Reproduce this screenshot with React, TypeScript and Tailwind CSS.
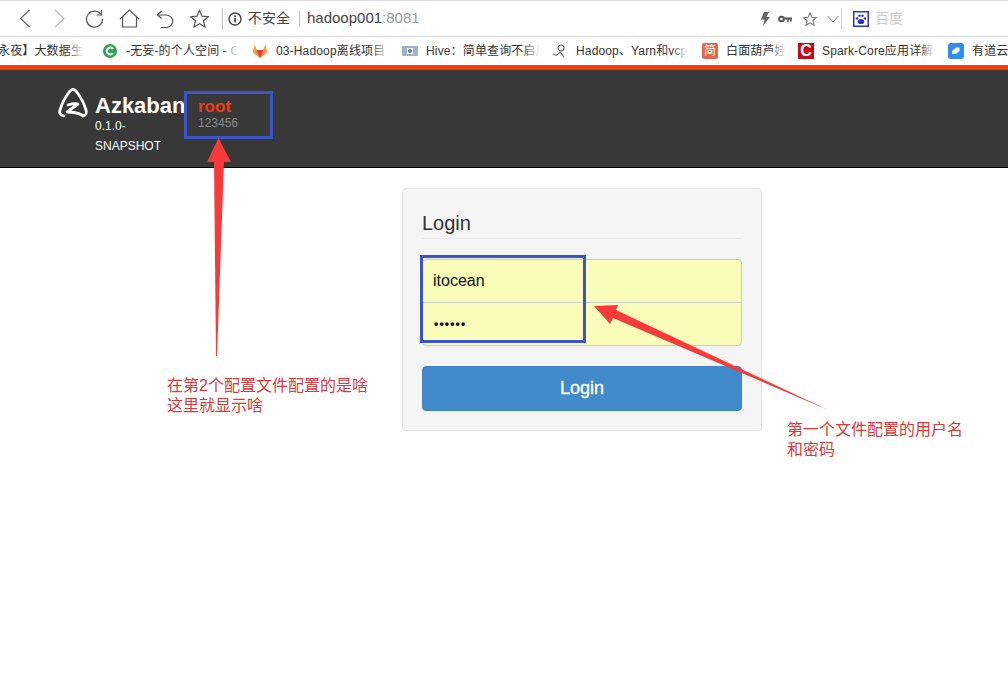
import { ReactNode } from "react";

const cjk = "font-['Liberation_Sans','Noto_Sans_CJK_SC',sans-serif]";

function Bookmark({ icon, text, box }: { icon: ReactNode; text: string; box: string }) {
  return (
    <div className="flex items-center shrink-0">
      {icon}
      <div className={`${box} relative overflow-hidden whitespace-nowrap text-[12px] tracking-[0.15px] text-[#333]`}>
        {text}
        <div className="absolute right-0 top-0 bottom-0 w-4 bg-gradient-to-r from-transparent to-[#fff]" />
      </div>
    </div>
  );
}

function BrowserBar() {
  return (
    <div className={`${cjk} bg-white`}>
      {/* toolbar */}
      <div className="h-[37px] border-t border-[#ddd] border-b border-b-[#d8d8d8] flex items-center pl-[19px] text-[#555]">
        <svg width="12" height="19" viewBox="0 0 12 19" fill="none" stroke="#666" strokeWidth="1.2">
          <path d="M10.5 1 1.5 9.5l9 8.5" />
        </svg>
        <svg width="11" height="19" viewBox="0 0 11 19" fill="none" stroke="#bbb" strokeWidth="1.2" className="ml-[23px]">
          <path d="M1 1l9 8.5L1 18" />
        </svg>
        <svg width="19" height="19" viewBox="0 0 19 19" fill="none" stroke="#555" strokeWidth="1.2" className="ml-[20px]">
          <path d="M16 5.5A8 8 0 1 0 17.5 10" />
          <path d="M16.5 1v5h-5" />
        </svg>
        <svg width="21" height="19" viewBox="0 0 21 19" fill="none" stroke="#555" strokeWidth="1.2" className="ml-[15px]">
          <path d="M1 10 10.5 1 20 10" />
          <path d="M3.5 8v10h14V8" />
        </svg>
        <svg width="18" height="18" viewBox="0 0 18 18" fill="none" stroke="#555" strokeWidth="1.2" className="ml-[16px]">
          <path d="M5.5 1 1.5 5l4 3.5" />
          <path d="M1.5 5H10a6.5 6 0 0 1 0 12.5H5" />
        </svg>
        <svg width="19" height="19" viewBox="0 0 19 19" fill="none" stroke="#555" strokeWidth="1.2" className="ml-[16px]">
          <path d="M9.5 1.2 12 7.2l6.3.5-4.8 4.1 1.5 6.2-5.5-3.3L4 18l1.5-6.2L.7 7.7 7 7.2z" />
        </svg>
        <div className="w-px h-[21px] bg-[#bbb] ml-[13px]" />
        <svg width="14" height="14" viewBox="0 0 14 14" className="ml-[5px]">
          <circle cx="7" cy="7" r="6" fill="none" stroke="#444" strokeWidth="1.4" />
          <rect x="6.2" y="6" width="1.7" height="4.5" fill="#444" />
          <rect x="6.2" y="3.4" width="1.7" height="1.6" fill="#444" />
        </svg>
        <span className="ml-[6px] text-[14px] text-[#444]">不安全</span>
        <div className="w-px h-4 bg-[#bbb] ml-[9px]" />
        <span className="ml-[7px] text-[15px] text-[#444]">
          hadoop001<span className="text-[#999]">:8081</span>
        </span>
        <div className="ml-auto flex items-center">
          <svg width="10" height="14" viewBox="0 0 10 14" fill="#666">
            <path d="M4 0h5L6.5 5H10L3 14l1.5-6.5H1z" />
          </svg>
          <svg width="14" height="8" viewBox="0 0 14 8" fill="none" stroke="#555" className="ml-[8px]">
            <circle cx="3.5" cy="4" r="2.3" strokeWidth="2" />
            <path d="M6 3.5h8" strokeWidth="2" />
            <path d="M10 4v3M13 4v2.5" strokeWidth="1.5" />
          </svg>
          <svg width="14" height="14" viewBox="0 0 19 19" fill="none" stroke="#777" strokeWidth="1.4" className="ml-[11px]">
            <path d="M9.5 1.2 12 7.2l6.3.5-4.8 4.1 1.5 6.2-5.5-3.3L4 18l1.5-6.2L.7 7.7 7 7.2z" />
          </svg>
          <svg width="12" height="8" viewBox="0 0 12 8" fill="none" stroke="#888" className="ml-[10px]">
            <path d="M.5 1 6 7l5.5-6" />
          </svg>
          <div className="w-px h-[21px] bg-[#ccc] ml-[2px]" />
          <svg width="16" height="16" viewBox="0 0 16 16" className="ml-[11px]">
            <rect width="16" height="16" fill="#2932c8" />
            <rect x="1.5" y="1.5" width="13" height="13" fill="#fff" />
            <ellipse cx="8" cy="10.5" rx="3.2" ry="2.6" fill="#2932c8" />
            <circle cx="4" cy="7.5" r="1.2" fill="#2932c8" />
            <circle cx="12" cy="7.5" r="1.2" fill="#2932c8" />
            <circle cx="6.5" cy="4.8" r="1.2" fill="#2932c8" />
            <circle cx="9.5" cy="4.8" r="1.2" fill="#2932c8" />
          </svg>
          <span className="ml-[6px] mr-[105px] text-[14px] text-[#ccc]">百度</span>
        </div>
      </div>
      {/* bookmarks */}
      <div className="h-[28px] flex items-center overflow-hidden">
        <Bookmark box="w-[85px] ml-[-2px] mr-[20px]" icon={null} text="永夜】大数据生产" />
        <Bookmark
          box="w-[112px] ml-[9px] mr-[14px]"
          icon={
            <svg width="14" height="14" viewBox="0 0 14 14">
              <circle cx="7" cy="7" r="7" fill="#2fa550" />
              <path d="M10 5a3.4 3.4 0 1 0 0 4" stroke="#fff" strokeWidth="2" fill="none" />
            </svg>
          }
          text="-无妄-的个人空间 - CSDN"
        />
        <Bookmark
          box="w-[112px] ml-[8px] mr-[14px]"
          icon={
            <svg width="16" height="16" viewBox="0 0 16 16">
              <path d="M8 15 .5 9.5 2.8 1.5l2 5.5h6.4l2-5.5 2.3 8z" fill="#f5a04f" />
              <path d="M8 15 2.8 7h10.4z" fill="#f0793a" />
              <path d="M8 15 4.8 7h6.4z" fill="#e2432a" />
            </svg>
          }
          text="03-Hadoop离线项目实战"
        />
        <Bookmark
          box="w-[114px] ml-[8px] mr-[12px]"
          icon={
            <svg width="16" height="12" viewBox="0 0 16 12">
              <rect y="1" width="16" height="10" rx="1" fill="#9db4cc" />
              <rect x="5" y="3" width="6" height="6" fill="#fff" />
              <circle cx="8" cy="6" r="2" fill="#5c7ea3" />
            </svg>
          }
          text="Hive：简单查询不启用MR"
        />
        <Bookmark
          box="w-[112px] ml-[8px] mr-[14px]"
          icon={
            <svg width="16" height="16" viewBox="0 0 16 16" fill="none" stroke="#666" strokeWidth="1.2">
              <circle cx="9" cy="5" r="3" />
              <path d="M1 11c3 2 5 1 7-2l4 5" />
            </svg>
          }
          text="Hadoop、Yarn和vcpu"
        />
        <Bookmark
          box="w-[60px] ml-[8px] mr-[12px]"
          icon={
            <div className="w-4 h-4 flex items-center justify-center rounded-[2px] bg-[#e2674e] text-[12px] leading-none text-white">
              简
            </div>
          }
          text="白面葫芦娃"
        />
        <Bookmark
          box="w-[113px] ml-[8px] mr-[13px]"
          icon={
            <div className="w-4 h-4 flex items-center justify-center bg-[#c40a12] text-[16px] font-bold leading-none text-white">
              C
            </div>
          }
          text="Spark-Core应用详解"
        />
        <Bookmark
          box="w-[60px] ml-[8px]"
          icon={
            <svg width="16" height="16" viewBox="0 0 16 16">
              <rect width="16" height="16" rx="3" fill="#2f8cf0" />
              <path d="M4 11V8l4-3.5h3.5V8L8 11z" fill="#fff" />
            </svg>
          }
          text="有道云笔记"
        />
      </div>
    </div>
  );
}

function Navbar() {
  return (
    <div className="h-[103px] bg-[#383838] border-t-[5px] border-t-[#f53c0c] border-b border-b-black flex font-['Liberation_Sans',sans-serif] pl-[58px] pt-[18px]">
      <svg width="30" height="31" viewBox="0 0 30 31" fill="none" stroke="#fff" strokeLinecap="round" strokeLinejoin="round" className="shrink-0">
        <path d="M6 28C2 27 1 25 2 22 4 15 8 8 12 3c2-2 4-2 6 0 4 5 8 12 10 19 1 4 0 5-3 6" strokeWidth="2.8" />
        <path d="M10 17c3-1 7-2 10-1l-11 8c5 0 11 1 15 3" strokeWidth="2.8" />
      </svg>
      <div className="ml-[7px] w-[90px] mt-[6px]">
        <div className="text-[22px] font-bold leading-[24px] text-white">Azkaban</div>
        <div className="text-[12px] leading-[20px] text-white mt-[-2px]">
          0.1.0-
          <br />
          SNAPSHOT
        </div>
      </div>
      <div className="ml-[13px] mt-[10px]">
        <div className="text-[17px] font-bold leading-[18px] text-[#f23a18]">root</div>
        <div className="text-[12px] leading-[15px] text-[#8a8a8a]">123456</div>
      </div>
    </div>
  );
}

function LoginCard() {
  return (
    <div className="w-[360px] h-[243px] mx-auto mt-[20px] translate-x-[78px] bg-[#f5f5f5] border border-[#e3e3e3] rounded px-[19px] pt-[19px] font-['Liberation_Sans',sans-serif]">
      <div className="text-[20px] leading-[30px] text-[#333] border-b border-[#e8e8e8]">Login</div>
      <div className="mt-[20px] h-[87px] border border-[#ccc] rounded bg-[#fafdb9] text-[16px] text-[#111]">
        <div className="h-[43px] border-b border-[#ccc] flex items-center pl-[10px]">itocean</div>
        <div className="h-[42px] flex items-center pl-[11px] text-[12px] font-bold tracking-[1.2px]">••••••</div>
      </div>
      <button className="mt-[20px] w-full h-[45px] bg-[#428bca] border border-[#3f85c2] rounded text-white text-[18px] [-webkit-text-stroke:0.3px_#fff]">
        Login
      </button>
    </div>
  );
}

export default function App() {
  return (
    <div className="relative w-[1008px] h-[675px] bg-white overflow-hidden">
      <BrowserBar />
      <Navbar />
      <LoginCard />

      {/* annotations drawn over the screenshot */}
      <div className="absolute left-[184px] top-[91px] w-[89px] h-[48px] border-[3px] border-[#3b55c8]" />
      <div className="absolute left-[420px] top-[255px] w-[166px] h-[88px] border-[3px] border-[#3b55c8]" />
      <svg width="1008" height="675" className="absolute left-0 top-0 pointer-events-none">
        <polygon points="218.5,138 231,162 224,162 217,356 216,356 214,162 207,162" fill="#f73b3b" />
        <polygon points="594,306 618,305 616,310 828,410 613,318 610,324" fill="#f73b3b" />
      </svg>
      <div className={`${cjk} absolute left-[167px] top-[376px] text-[16px] leading-[20px] text-[#d83a3a]`}>
        在第2个配置文件配置的是啥
        <br />
        这里就显示啥
      </div>
      <div className={`${cjk} absolute left-[787px] top-[420px] text-[16px] leading-[20px] text-[#d83a3a]`}>
        第一个文件配置的用户名
        <br />
        和密码
      </div>
    </div>
  );
}
